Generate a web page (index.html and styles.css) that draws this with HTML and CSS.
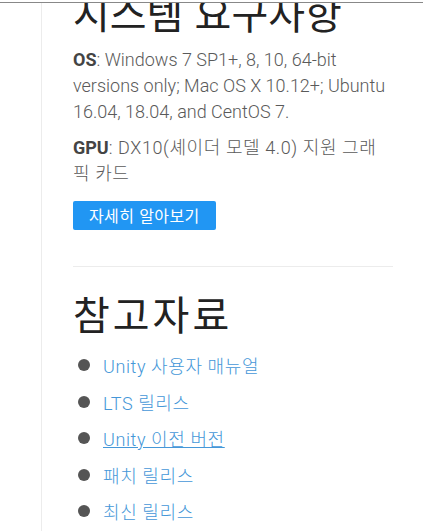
FILE: index.html
```html
<!DOCTYPE html>
<html lang="ko">
<head>
  <meta charset="UTF-8">
  <title>시스템 요구사항</title>
  <link rel="stylesheet" href="styles.css">
</head>
<body>
  <div class="topbar"></div>

  <div class="content">
    <h2 class="first">시스템 요구사항</h2>
    <p><strong>OS</strong>: Windows 7 SP1+, 8, 10, 64-bit versions only; Mac OS X 10.12+; Ubuntu 16.04, 18.04, and CentOS 7.</p>
    <p class="gpu"><strong>GPU</strong>: DX10(셰이더 모델 4.0) 지원 그래픽 카드</p>
    <a href="#" class="btn-mas">자세히 알아보기</a>

    <hr>

    <h2 class="refs-title">참고자료</h2>
    <ul class="refs">
      <li><a href="#">Unity 사용자 매뉴얼</a></li>
      <li><a href="#">LTS 릴리스</a></li>
      <li><a href="#" class="hover">Unity 이전 버전</a></li>
      <li><a href="#">패치 릴리스</a></li>
      <li><a href="#">최신 릴리스</a></li>
    </ul>
  </div>
</body>
</html>
```

FILE: styles.css
```css
body {
  margin: 0;
  background: #fff;
  font-family: Roboto, "Noto Sans CJK KR", sans-serif;
  overflow: hidden;
}
.topbar {
  position: fixed;
  top: 0;
  left: 0;
  right: 2px;
  height: 2px;
  background: #fff;
  border-bottom: 1px solid #888;
  z-index: 2;
}
.content {
  margin-left: 41px;
  border-left: 1px solid #ececec;
  padding: 0 0 40px 31px;
  width: 320px;
}
h2 {
  font-family: "Noto Sans CJK KR", sans-serif;
  font-size: 40px;
  font-weight: 400;
  line-height: 48px;
  color: #222;
  margin: 22px 0 15px 0;
}
h2.first {
  margin-top: -12px;
  margin-bottom: 11px;
}
h2.refs-title {
  letter-spacing: 3px;
}
p {
  font-size: 18px;
  line-height: 26px;
  font-weight: 300;
  color: #5a5a5a;
  margin: 0 0 10px 0;
}
p.gpu {
  letter-spacing: 0.6px;
}
p strong {
  font-weight: 700;
  letter-spacing: 0;
  color: #444;
}
.btn-mas {
  display: inline-block;
  margin-top: 4px;
  height: 29px;
  line-height: 29px;
  padding: 0 16px;
  background: #2196f3;
  color: #fff;
  border-radius: 2px;
  text-decoration: none;
  font-size: 16px;
  letter-spacing: 0.4px;
  font-family: "Noto Sans CJK KR", sans-serif;
}
hr {
  border: none;
  border-top: 1px solid #ececec;
  margin: 36px 0 0 0;
}
.refs {
  list-style: none;
  margin: 0;
  padding: 0;
}
.refs li {
  display: flex;
  align-items: center;
  height: 26px;
  margin-bottom: 10.6px;
  font-size: 18px;
  letter-spacing: 0.6px;
}
.refs li::before {
  content: "";
  width: 12px;
  height: 12px;
  border-radius: 50%;
  background: #555;
  margin: 0 13px 0 5px;
}
.refs a {
  color: #4597d8;
  text-decoration: none;
  font-weight: 300;
}
.refs a.hover {
  text-decoration: underline;
}
```
